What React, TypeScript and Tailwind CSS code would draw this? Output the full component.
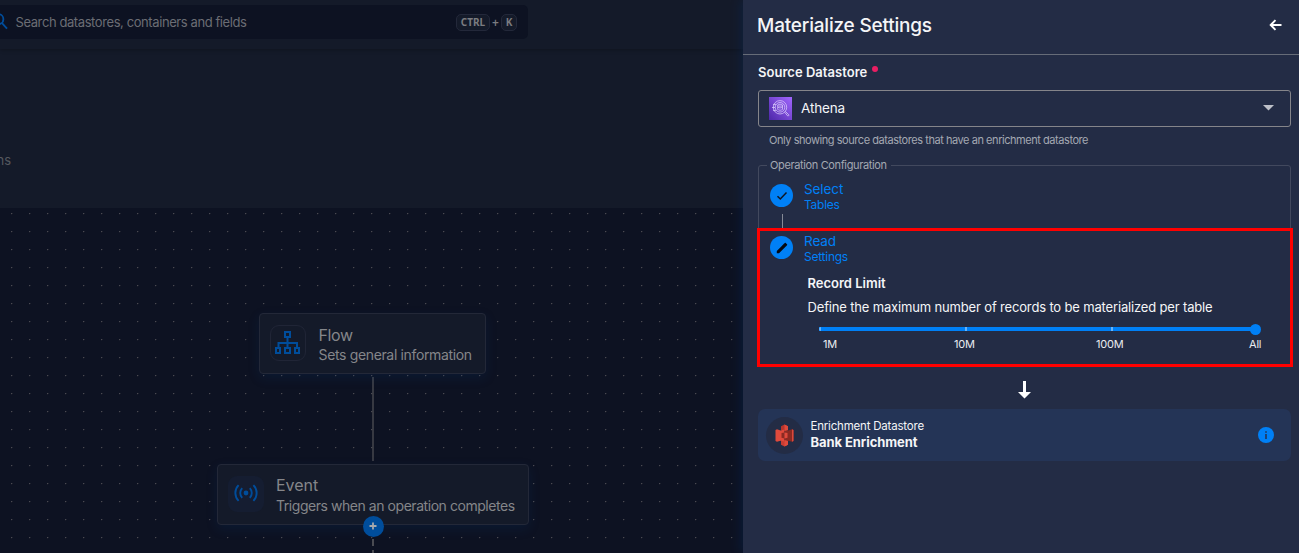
import React from "react";

const FONT = "font-['Inter','Noto_Sans',sans-serif]";

function SearchBar() {
  return (
    <header className="h-[49px] shrink-0 pt-[5px] shadow-[0_1px_4px_rgba(0,0,0,0.25)]">
      <div className="flex h-[34px] w-[528px] items-center rounded-r-[5px] bg-[#0d1222] pr-[11px]">
        <svg className="h-[34px] w-[15px] shrink-0" viewBox="0 0 15 34" fill="none" stroke="#004d9b" strokeWidth="1.8">
          <circle cx="-1.6" cy="14.2" r="5" />
          <path d="M2 18.2 L7 23.600" />
        </svg>
        <span className="ml-[0.5px] pb-px whitespace-nowrap text-[13px] leading-[16px] tracking-[-0.41px] text-[#6b6d74]">
          Search datastores, containers and fields
        </span>
        <div className="ml-auto flex items-center gap-[2px] text-[#7b7c80]">
          <kbd className="flex h-[17px] w-[34px] items-center justify-center rounded-[5px] border border-[#23283a] bg-[#141a29] font-['Noto_Sans',sans-serif] text-[10px] font-bold">
            CTRL
          </kbd>
          <span className="w-[7px] text-center font-['Noto_Sans',sans-serif] text-[12px] leading-[17px] font-semibold">+</span>
          <kbd className="flex h-[17px] w-[16px] items-center justify-center rounded-[5px] border border-[#23283a] bg-[#141a29] font-['Noto_Sans',sans-serif] text-[10px] font-bold">
            K
          </kbd>
        </div>
      </div>
    </header>
  );
}

function FlowIcon() {
  return (
    <svg width="26" height="24" viewBox="0 0 26 24" fill="none" stroke="#004d9b" strokeWidth="2">
      <rect x="10" y="1" width="5" height="5" />
      <rect x="1" y="17" width="4" height="5" />
      <rect x="10" y="17" width="5" height="5" />
      <rect x="20" y="17" width="4" height="5" />
      <path d="M12.500 6v11M3.500 17v-5h18.500v5" />
    </svg>
  );
}

function EventIcon() {
  return (
    <svg width="24" height="18" viewBox="0 0 24 18" fill="none" stroke="#004d9b" strokeWidth="1.9">
      <circle cx="12" cy="9" r="2.4" fill="#004d9b" stroke="none" />
      <path d="M8.2 4.2a6.800 6.800 0 0 0 0 9.600M15.800 4.200a6.800 6.800 0 0 1 0 9.600M4.600 1.200a11 11 0 0 0 0 15.600M19.400 1.200a11 11 0 0 1 0 15.600" />
    </svg>
  );
}

function Canvas() {
  return (
    <main className="relative flex-1 overflow-hidden bg-[#0d1222]">
      <svg className="absolute inset-0 h-full w-full">
        <defs>
          <pattern id="dots" width="18" height="18" patternUnits="userSpaceOnUse" x="2" y="-4">
            <rect x="9" y="9" width="1" height="1" fill="#4a4a52" />
            <rect x="10" y="9" width="1" height="1" fill="#20232f" />
            <rect x="9" y="10" width="1" height="1" fill="#181b29" />
          </pattern>
        </defs>
        <rect width="100%" height="100%" fill="url(#dots)" />
        <path d="M373 169V253" stroke="#43444b" strokeWidth="1.6" />
        <path d="M373 331V338M373 342V345" stroke="#5a5b60" strokeWidth="1.6" />
      </svg>

      <div className="absolute left-[259px] top-[105px] flex h-[61px] w-[227px] rounded-[4px] border border-[#232838] bg-[#141a29] pl-[10px] shadow-[0_4px_12px_rgba(0,60,130,0.16)]">
        <div className="mt-[11px] flex h-[36px] w-[36px] items-center justify-center rounded-[9px] border border-[#202536]">
          <FlowIcon />
        </div>
        <div className="ml-[12.500px] whitespace-nowrap text-[#85868a]">
          <div className="mt-[11px] text-[16px] leading-[20px] tracking-[-0.4px]">Flow</div>
          <div className="text-[14px] leading-[20px] tracking-[-0.35px]">Sets general information</div>
        </div>
      </div>

      <div className="absolute left-[217px] top-[256px] flex h-[61px] w-[312px] rounded-[4px] border border-[#232838] bg-[#141a29] pl-[10px] shadow-[0_4px_12px_rgba(0,60,130,0.16)]">
        <div className="mt-[11px] flex h-[36px] w-[36px] items-center justify-center rounded-[9px] bg-[#151d31] pr-px pb-[3px]">
          <EventIcon />
        </div>
        <div className="ml-[12px] whitespace-nowrap text-[#85868a]">
          <div className="mt-[10px] text-[16px] leading-[20px] tracking-[-0.05px]">Event</div>
          <div className="mt-[1px] text-[14px] leading-[20px] tracking-[-0.45px]">Triggers when an operation completes</div>
        </div>
      </div>

      <div className="absolute left-[363px] top-[308px] flex h-[21px] w-[21px] items-center justify-center rounded-full bg-[#004d9b] pr-px pb-px">
        <svg width="8" height="8" viewBox="0 0 8 8" stroke="#a7a9ad" strokeWidth="1.800">
          <path d="M4 .5v7M.5 4h7" />
        </svg>
      </div>
    </main>
  );
}

function AthenaIcon() {
  return (
    <svg width="23" height="23" viewBox="0 0 23 23" fill="none">
      <defs>
        <linearGradient id="athena" x1="0" y1="1" x2="1" y2="0">
          <stop stopColor="#4d27a8" />
          <stop offset="1" stopColor="#a166ff" />
        </linearGradient>
      </defs>
      <rect width="23" height="23" fill="url(#athena)" />
      <g stroke="#e4d9ff" strokeWidth=".7">
        <circle cx="11" cy="10.3" r="6.7" />
        <circle cx="11" cy="10.3" r="4.8" />
        <path d="M8.7 8.200v4c0 1.400 4.800 1.400 4.800 0v-4M8.700 8.200c0-1.300 4.800-1.300 4.800 0s-4.800 1.300-4.800 0M9 10.200c1 1 3.400 1 4.400-.4" />
        <path d="M15.600 15.200l3 3.600c.5.5 1.700-.4 1.200-1l-3.400-3.400M3 10.500h3M4 7.400h3M4 13.400h3" />
      </g>
    </svg>
  );
}

function BucketIcon() {
  return (
    <svg width="19" height="23" viewBox="0 0 19 23">
      <path d="M9.500.5 6 2.200V6l3.500 1 3.500-1V2.200z" fill="#b8352c" />
      <path d="M9.500 22.500 6 20.800V17l3.500-1 3.500 1v3.800z" fill="#c93d32" />
      <path d="M.5 6 2 5.200l3.500 1.200L9.500 5.500v12l-4-.8L2 17.800.5 17z" fill="#e04a3c" />
      <path d="M18.500 6 17 5.200l-3.500 1.200-4-.9v12l4-.8 3.500 1.100 1.500-.8z" fill="#8c2a22" />
      <path d="M17 5.200 18.500 6v11l-1.500.8z" fill="#dc493c" />
      <path d="M6.500 9 9.500 8.400v6l-3-.6z" fill="#8c2a22" />
      <path d="M12.500 9 9.500 8.400v6l3-.6z" fill="#e04a3c" />
      <path d="M9.500.5 13 2.200V6l-3.500 1zM9.500 16l3.500 1v3.800l-3.500 1.700z" fill="#e04a3c" />
    </svg>
  );
}

function Step({ title, subtitle, children }: { title: string; subtitle: string; children: React.ReactNode }) {
  return (
    <div className="flex h-[32px] text-[#0080f6]">
      <div className="mt-[3px] flex h-[23px] w-[23px] items-center justify-center rounded-full bg-[#0080f6]">{children}</div>
      <div className="ml-[11px] whitespace-nowrap">
        <div className="text-[13.500px] leading-[16px] tracking-[-0.1px]">{title}</div>
        <div className="text-[12px] leading-[16px] tracking-[-0.25px]">{subtitle}</div>
      </div>
    </div>
  );
}

function RecordSlider() {
  return (
    <div className="mt-[9px] ml-[60px] h-[34px] w-[442px]">
      <div className="flex h-[10px] items-center">
        <div className="flex h-[4px] flex-1 bg-[#0080f6]">
          <i className="block h-[4px] w-[2px] rounded-l bg-[#66b3fa]" />
          <i className="ml-[144px] block h-[4px] w-[2px] bg-[#66b3fa]" />
          <i className="ml-[144px] block h-[4px] w-[2px] bg-[#66b3fa]" />
        </div>
        <div className="-ml-[7px] h-[11px] w-[11px] rounded-full bg-[#0080f6]" />
      </div>
      <div className="mt-[2px] grid w-[443px] grid-cols-[135px_146px_143px_19px] whitespace-nowrap text-[11px] leading-[16px] tracking-[-0.2px] text-[#e9ebef]">
        <span className="pl-[4px]">1M</span>
        <span>10M</span>
        <span className="-ml-[4px]">100M</span>
        <span className="ml-[6px]">All</span>
      </div>
    </div>
  );
}

function SettingsPanel() {
  return (
    <aside className="relative flex w-[556px] shrink-0 flex-col bg-[#232c45] text-[#f4f5f7] shadow-[-2px_0_10px_rgba(0,50,110,0.30)]">
      <div className="flex h-[55px] shrink-0 items-center justify-between border-b border-[#666c78] pr-[17px] pb-[3px] pl-[14px]">
        <h1 className="whitespace-nowrap text-[19px] leading-[24px] font-medium tracking-[-0.2px]">Materialize Settings</h1>
        <svg className="-mt-[2px]" width="13" height="12" viewBox="0 0 13 12" fill="none" stroke="#fff" strokeWidth="1.900">
          <path d="M12.500 6H2M6.500 1.200 1.700 6l4.800 4.800" />
        </svg>
      </div>

      <div className="flex flex-1 flex-col pr-[8px] pl-[15px]">
        <div className="mt-[9px] flex h-[16px]">
          <span className="whitespace-nowrap text-[13px] leading-[16px] font-semibold tracking-[0.03px]">Source Datastore</span>
          <i className="mt-[2px] ml-[5px] block h-[6px] w-[6px] rounded-full bg-[#ea1e63]" />
        </div>

        <div className="mt-[10px] flex h-[37px] items-center rounded-[3px] border border-[#85858a] pr-[16px] pl-[10px]">
          <AthenaIcon />
          <span className="ml-[9px] pb-[2px] text-[13.500px] leading-[18px] tracking-[-0.150px]">Athena</span>
          <svg className="-mt-px ml-auto" width="11" height="6" viewBox="0 0 11 6" fill="#bdc0c8">
            <path d="M0 0h11L5.500 5.500z" />
          </svg>
        </div>
        <p className="mt-[6px] pl-[11px] whitespace-nowrap text-[11px] leading-[14px] tracking-[-0.45px] text-[#a3a8b2]">
          Only showing source datastores that have an enrichment datastore
        </p>

        <fieldset className="mt-[11px] h-[209px] rounded-[3px] border border-[#42495e] pl-[8px]">
          <legend className="h-[14px] pr-[4px] pl-[3px] whitespace-nowrap text-[11px] leading-[14px] tracking-[-0.37px] text-[#a3a8b2]">Operation Configuration</legend>
          <div className="mt-[9px] pl-[3px]">
            <Step title="Select" subtitle="Tables">
              <svg width="12" height="10" viewBox="0 0 12 10" fill="none" stroke="#101522" strokeWidth="1.500">
                <path d="M1.500 5.200 4.300 8 10.500 1.500" />
              </svg>
            </Step>
            <div className="mt-[1px] mb-[5px] ml-[12px] h-[14px] w-px bg-[#858a96]" />
            <Step title="Read" subtitle="Settings">
              <svg width="12" height="12" viewBox="0 0 12 12" fill="#050912">
                <path d="M.8 9v2.200H3l6-6L6.800 3zM11 3.200c.3-.3.3-.6 0-.9L9.700 1c-.3-.3-.6-.3-.9 0L7.600 2.200l2.200 2.200z" />
                <path d="M6.500 3.300 8 1.800l2.200 2.200-1.500 1.500z" />
              </svg>
            </Step>
          </div>
          <div className="mt-[10px] ml-[40.500px] whitespace-nowrap text-[13px] leading-[16px]">
            <h2 className="font-semibold tracking-[0px]">Record Limit</h2>
            <p className="mt-[8px] tracking-[-0.160px]">Define the maximum number of records to be materialized per table</p>
          </div>
          <div className="-ml-[8px]">
            <RecordSlider />
          </div>
        </fieldset>

        <div className="mt-[13px] flex h-[20px] justify-center">
          <svg width="13" height="19" viewBox="0 0 13 19" fill="#fff">
            <path d="M5 1h3v11h5L6.500 18.500 0 12h5z" />
          </svg>
        </div>

        <div className="mt-[9px] flex h-[52px] items-center rounded-[7px] bg-[#243456] pr-[17px] pl-[8px]">
          <div className="flex h-[37px] w-[37px] items-center justify-center rounded-full bg-[#232c45]">
            <BucketIcon />
          </div>
          <div className="ml-[7.500px] pb-[3px] whitespace-nowrap">
            <div className="text-[11.500px] leading-[16px] tracking-[-0.200px]">Enrichment Datastore</div>
            <div className="text-[13px] leading-[16px] font-bold tracking-[-0.070px]">Bank Enrichment</div>
          </div>
          <svg className="ml-auto" width="16" height="16" viewBox="0 0 16 16">
            <circle cx="8" cy="8" r="8" fill="#0080f6" />
            <path d="M7.200 4.300h1.600v1.400H7.200zM7.200 7h1.600v5H7.200z" fill="#243456" />
          </svg>
        </div>
      </div>

      <div className="pointer-events-none absolute top-[228px] left-[14px] h-[139px] w-[536px] border-[3px] border-[#ff0000]" />
    </aside>
  );
}

export default function App() {
  return (
    <div className={`flex h-[553px] w-[1299px] overflow-hidden bg-[#141a29] ${FONT}`}>
      <div className="flex min-w-0 flex-1 flex-col">
        <SearchBar />
        <div className="h-[159px] shrink-0 overflow-hidden pt-[103px]">
          <div className="flex w-[11px] justify-end whitespace-nowrap text-[13px] leading-[17px] text-[#55585f]">ns</div>
        </div>
        <Canvas />
      </div>
      <SettingsPanel />
    </div>
  );
}
